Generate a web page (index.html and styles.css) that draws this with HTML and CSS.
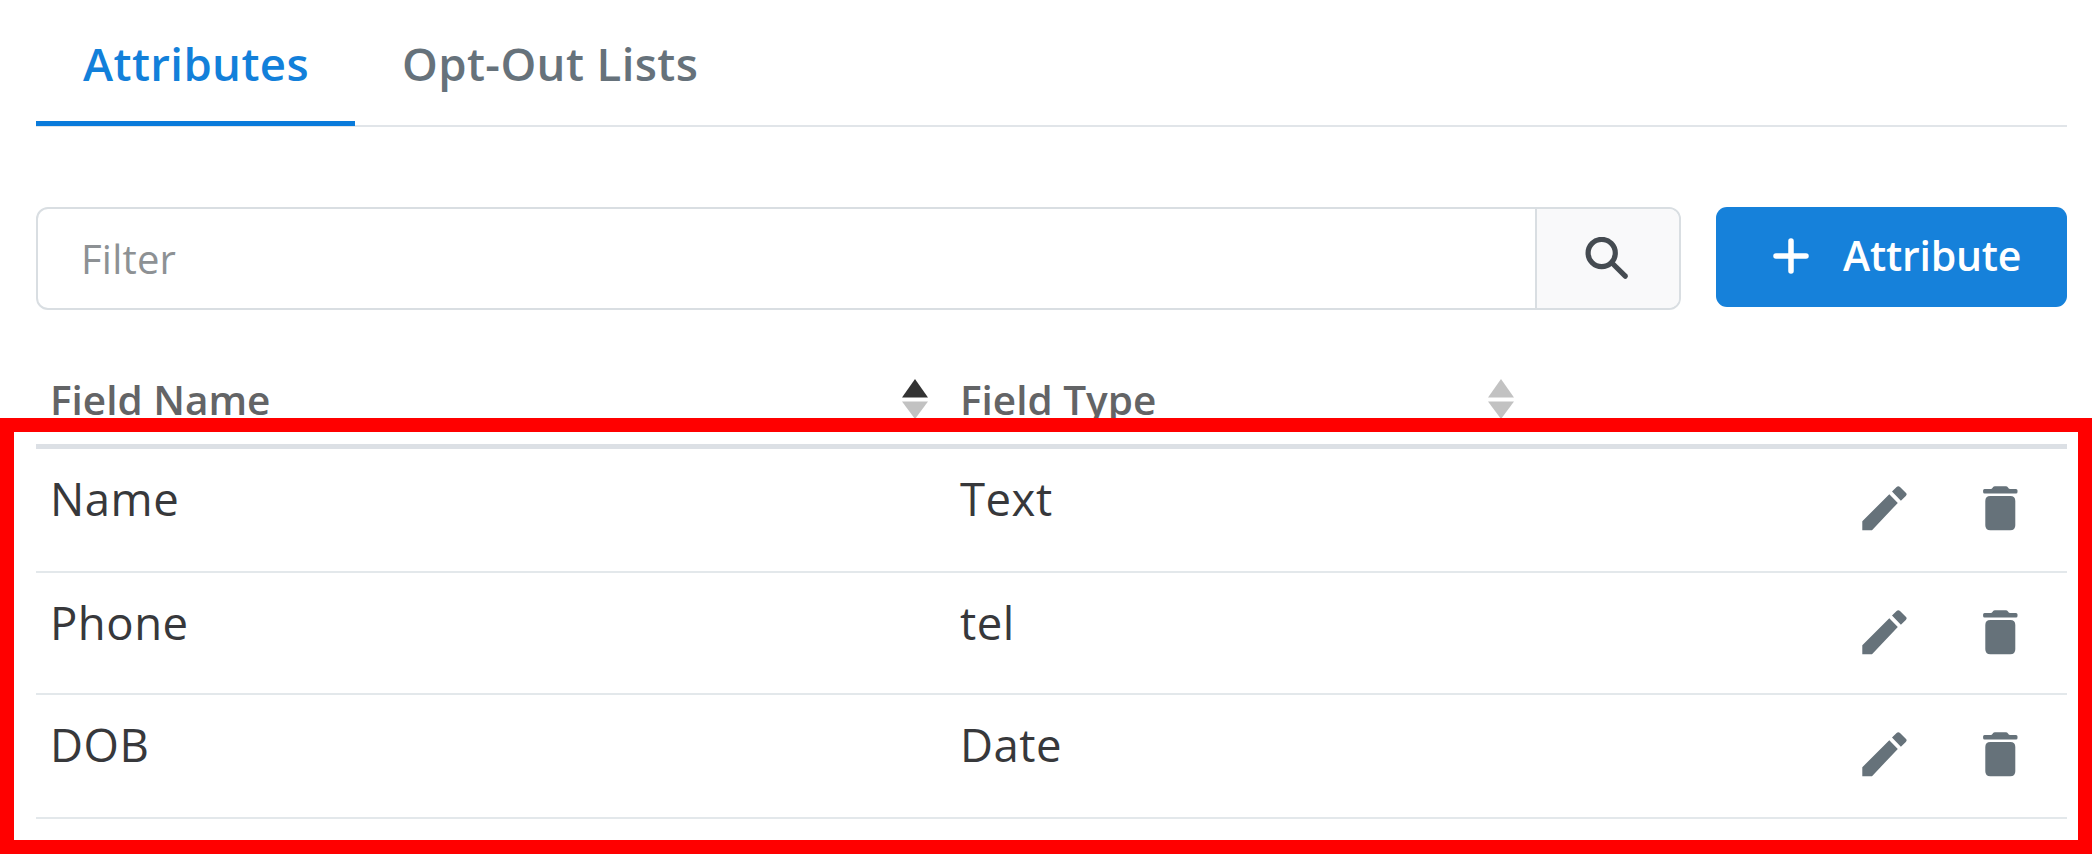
FILE: index.html
```html
<!DOCTYPE html>
<html lang="en">
<head>
<meta charset="utf-8">
<title>Attributes</title>
<link rel="stylesheet" href="styles.css">
</head>
<body>
<svg class="defs" width="0" height="0" aria-hidden="true">
  <symbol id="pencil" viewBox="0 0 45 45">
    <path d="M.3 35.2 27.3 8.3 35.8 16.9 10 44.2H.3zM30 5.6 34.6 1Q36.3-.6 38 1L43.800 6.700Q45.500 8.300 43.800 10L38.900 14.700z"/>
  </symbol>
  <symbol id="trash" viewBox="0 0 35 45">
    <path d="M1.500 3H7.500Q9 3 9.800 1.500Q10.600.3 12 .3H22.800Q24.200.3 25 1.500Q25.800 3 27.300 3H33Q34.500 3 34.500 4.500V6Q34.500 7.600 33 7.600H1.500Q.1 7.600.1 6V4.500Q.1 3 1.500 3zM7.300 10H27.300Q32.300 10 32.300 15V39.300Q32.300 44.300 27.300 44.300H7.300Q2.300 44.300 2.300 39.300V15Q2.300 10 7.300 10z"/>
  </symbol>
</svg>
<main class="page">
  <nav class="tabs">
    <a class="tab active"><span>Attributes</span></a>
    <a class="tab"><span>Opt-Out Lists</span></a>
  </nav>
  <div class="toolbar">
    <div class="filter">
      <div class="field"><span>Filter</span></div>
      <div class="search">
        <svg width="44" height="44" viewBox="0 0 44 44"><circle cx="16.700" cy="16" r="13.600"/><path d="M27.500 26.500 40.300 39.200"/></svg>
      </div>
    </div>
    <button class="add">
      <svg width="36" height="36" viewBox="0 0 36 36"><path d="M3 18H33M18 3V33"/></svg>
      <span>Attribute</span>
    </button>
  </div>
  <div class="table">
    <div class="row head">
      <div class="cell"><span>Field Name</span>
        <svg class="sort asc" width="26" height="40" viewBox="0 0 26 40"><path class="up" d="M13 0 26 18.500H0z"/><path d="M0 22.500H26L13 40z"/></svg></div>
      <div class="cell"><span>Field Type</span>
        <svg class="sort" width="26" height="40" viewBox="0 0 26 40"><path class="up" d="M13 0 26 18.500H0z"/><path d="M0 22.500H26L13 40z"/></svg></div>
    </div>
    <div class="row">
      <div class="cell"><span>Name</span></div><div class="cell"><span>Text</span></div>
      <div class="actions"><svg width="45" height="45"><use href="#pencil"/></svg><svg width="35" height="45"><use href="#trash"/></svg></div>
    </div>
    <div class="row short">
      <div class="cell"><span>Phone</span></div><div class="cell"><span>tel</span></div>
      <div class="actions"><svg width="45" height="45"><use href="#pencil"/></svg><svg width="35" height="45"><use href="#trash"/></svg></div>
    </div>
    <div class="row">
      <div class="cell"><span>DOB</span></div><div class="cell"><span>Date</span></div>
      <div class="actions"><svg width="45" height="45"><use href="#pencil"/></svg><svg width="35" height="45"><use href="#trash"/></svg></div>
    </div>
  </div>
  <div class="highlight"></div>
</main>
</body>
</html>
```
FILE: styles.css
```css
* { box-sizing: border-box; }
body { margin: 0; background: #fff; font-family: "Open Sans", sans-serif; overflow: hidden; }
svg { display: block; flex: none; }
.defs { position: absolute; }
.page { position: relative; width: 2092px; height: 854px; padding: 0 25px 0 36px; }

.tabs { display: flex; height: 127px; border-bottom: 2px solid #e1e5e9; }
.tab { height: 126px; padding: 32px 47px 0; font-size: 45.5px; line-height: 62px; font-weight: 600; letter-spacing: .4px; color: #66727b; white-space: nowrap; }
.tab.active { width: 319px; padding-right: 0; color: #1280da; border-bottom: 5px solid #0a7bdb; }

.toolbar { display: flex; justify-content: space-between; padding-top: 80px; height: 240px; }
.filter { display: flex; width: 1645px; height: 103px; border: 2px solid #d9dee2; border-radius: 12px; overflow: hidden; }
.field { flex: 1; padding: 22px 0 0 43px; font-size: 40px; line-height: 56px; letter-spacing: .2px; color: #8d9194; }
.search { width: 144px; border-left: 2px solid #d9dee2; background: #f9f9fa; padding: 28px 0 0 48px; }
.search svg { fill: none; stroke: #454b51; stroke-width: 5.2; stroke-linecap: round; }
.add { display: flex; width: 351px; height: 100px; border: 0; border-radius: 11px; padding: 0 0 0 57px; background: #1681da; color: #fff; font: 600 41px/56px "Open Sans", sans-serif; letter-spacing: -.2px; }
.add svg { margin-top: 31px; fill: none; stroke: #fff; stroke-width: 5.5; stroke-linecap: round; }
.add span { margin: 20px 0 0 34px; }

.row { display: flex; height: 124px; border-bottom: 2px solid #e3e8eb; }
.row.short { height: 122px; }
.cell { display: flex; width: 910px; padding: 18px 0 0 14px; font-size: 45.5px; line-height: 62px; letter-spacing: .5px; color: #37383b; white-space: nowrap; }
.cell + .cell { width: 586px; padding-left: 14px; }
.head { height: 82px; border-bottom: 5px solid #dce0e5; }
.head .cell { justify-content: space-between; padding-top: 5px; padding-right: 18px; font-size: 40.5px; line-height: 56px; font-weight: 600; letter-spacing: 0; color: #636466; }
.head .cell + .cell { padding-right: 18px; }
.sort { margin-top: 7px; fill: #c2c2c2; }
.sort.asc .up { fill: #333; }
.actions { display: flex; flex: 1; justify-content: flex-end; gap: 76px; padding: 37px 49px 0 0; fill: #66727a; }

/* callout frame drawn over the table */
.highlight { position: absolute; left: 0; top: 418px; width: 2092px; height: 436px; border: 14px solid #f00; }
```
